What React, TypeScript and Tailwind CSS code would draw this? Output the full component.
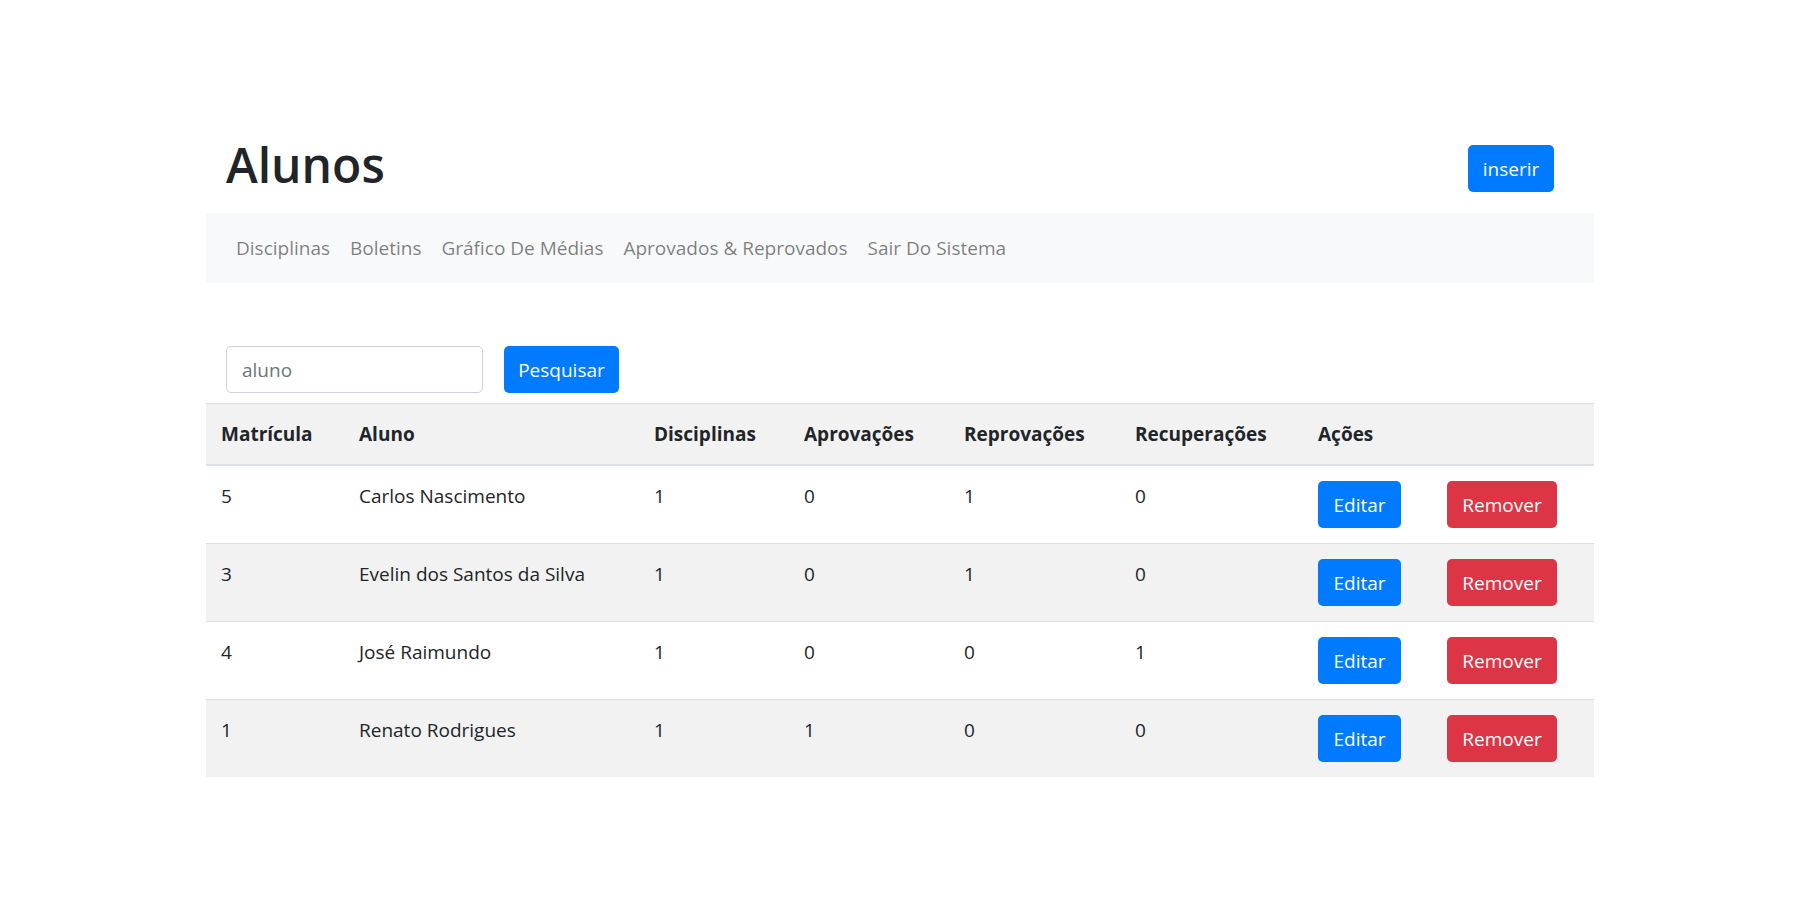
import React, { useState } from 'react';

type Aluno = {
  matricula: number;
  nome: string;
  disciplinas: number;
  aprovacoes: number;
  reprovacoes: number;
  recuperacoes: number;
};

const alunos: Aluno[] = [
  { matricula: 5, nome: 'Carlos Nascimento', disciplinas: 1, aprovacoes: 0, reprovacoes: 1, recuperacoes: 0 },
  { matricula: 3, nome: 'Evelin dos Santos da Silva', disciplinas: 1, aprovacoes: 0, reprovacoes: 1, recuperacoes: 0 },
  { matricula: 4, nome: 'José Raimundo', disciplinas: 1, aprovacoes: 0, reprovacoes: 0, recuperacoes: 1 },
  { matricula: 1, nome: 'Renato Rodrigues', disciplinas: 1, aprovacoes: 1, reprovacoes: 0, recuperacoes: 0 },
];

const navLinks = ['Disciplinas', 'Boletins', 'Gráfico De Médias', 'Aprovados & Reprovados', 'Sair Do Sistema'];

const App: React.FC = () => {
  const [busca, setBusca] = useState('');

  return (
    <div className="min-h-screen bg-white font-['Open_Sans','Noto_Sans',sans-serif] text-[19px] leading-[30px] text-[#212529]">
      <div className="mx-auto w-[1388px] pt-[135px]">
        <div className="flex h-[78px] items-start justify-between pl-[20px] pr-[40px]">
          <h1 className="text-[48px] font-semibold leading-[60px]">Alunos</h1>
          <button className="mt-[10px] h-[47px] w-[86px] rounded-[5px] bg-[#007bff] text-white">inserir</button>
        </div>

        <nav className="flex h-[70px] items-center bg-[#f8f9fa] px-[20px]">
          {navLinks.map((link) => (
            <a key={link} href="#" className="px-[10px] py-[10px] text-black/50 hover:text-black/70">
              {link}
            </a>
          ))}
        </nav>

        <div className="mt-[63px] flex items-center pl-[20px]">
          <input
            value={busca}
            onChange={(e) => setBusca(e.target.value)}
            placeholder="aluno"
            className="h-[47px] w-[257px] rounded-[5px] border border-[#ced4da] px-[15px] text-[#495057] placeholder:text-[#6c757d] focus:outline-none"
          />
          <button className="ml-[21px] h-[47px] w-[115px] rounded-[5px] bg-[#007bff] text-white">Pesquisar</button>
        </div>

        <table className="mt-[10px] w-full table-fixed border-collapse text-left">
          <thead>
            <tr className="border-t border-b-2 border-[#dee2e6] bg-[#f2f2f2]">
              <th className="w-[138px] p-[15px] font-bold">Matrícula</th>
              <th className="w-[295px] p-[15px] font-bold">Aluno</th>
              <th className="w-[150px] p-[15px] font-bold">Disciplinas</th>
              <th className="w-[160px] p-[15px] font-bold">Aprovações</th>
              <th className="w-[171px] p-[15px] font-bold">Reprovações</th>
              <th className="w-[183px] p-[15px] font-bold">Recuperações</th>
              <th className="w-[129px] p-[15px] font-bold">Ações</th>
              <th className="p-[15px]"></th>
            </tr>
          </thead>
          <tbody>
            {alunos.map((a, i) => (
              <tr key={a.matricula} className={`border-t border-[#dee2e6] ${i % 2 === 1 ? 'bg-[#f2f2f2]' : 'bg-white'}`}>
                <td className="p-[15px] align-top">{a.matricula}</td>
                <td className="p-[15px] align-top">{a.nome}</td>
                <td className="p-[15px] align-top">{a.disciplinas}</td>
                <td className="p-[15px] align-top">{a.aprovacoes}</td>
                <td className="p-[15px] align-top">{a.reprovacoes}</td>
                <td className="p-[15px] align-top">{a.recuperacoes}</td>
                <td className="p-[15px] align-top">
                  <button className="h-[47px] w-[83px] rounded-[5px] bg-[#007bff] text-white">Editar</button>
                </td>
                <td className="p-[15px] align-top">
                  <button className="h-[47px] w-[110px] rounded-[5px] bg-[#dc3545] text-white">Remover</button>
                </td>
              </tr>
            ))}
          </tbody>
        </table>
      </div>
    </div>
  );
};

export default App;
